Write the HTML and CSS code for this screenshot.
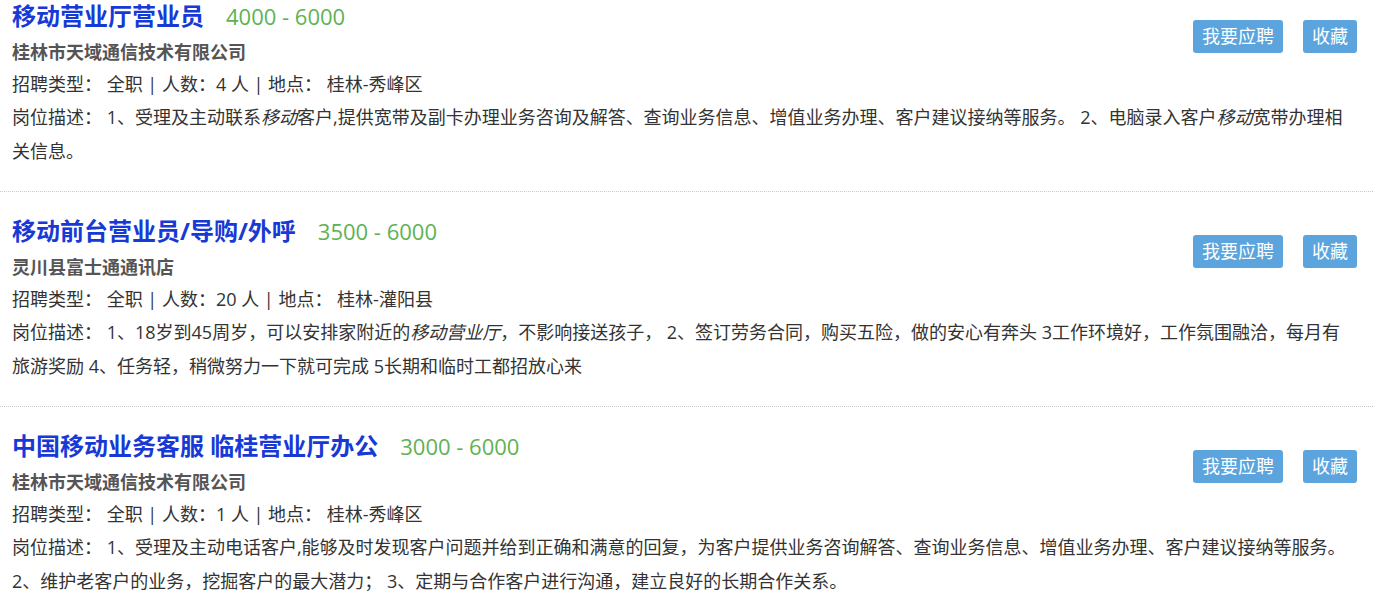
FILE: index.html
```html
<!DOCTYPE html>
<html lang="zh-CN">
<head>
  <meta charset="UTF-8">
  <title>职位列表</title>
  <link rel="stylesheet" href="styles.css">
</head>
<body>

  <ul class="job-list">
    <li class="job-item">
      <div class="job-actions">
        <a class="btn" href="#">我要应聘</a>
        <a class="btn" href="#">收藏</a>
      </div>
      <h2 class="job-title">移动营业厅营业员<span class="salary">4000 - 6000</span></h2>
      <p class="company">桂林市天域通信技术有限公司</p>
      <p class="info">招聘类型： 全职 | 人数：4 人 | 地点： 桂林-秀峰区</p>
      <p class="desc">岗位描述： 1、受理及主动联系<em>移动</em>客户,提供宽带及副卡办理业务咨询及解答、查询业务信息、增值业务办理、客户建议接纳等服务。 2、电脑录入客户<em>移动</em>宽带办理相关信息。</p>
    </li>
    <li class="job-item">
      <div class="job-actions">
        <a class="btn" href="#">我要应聘</a>
        <a class="btn" href="#">收藏</a>
      </div>
      <h2 class="job-title">移动前台营业员/导购/外呼<span class="salary">3500 - 6000</span></h2>
      <p class="company">灵川县富士通通讯店</p>
      <p class="info">招聘类型： 全职 | 人数：20 人 | 地点： 桂林-灌阳县</p>
      <p class="desc">岗位描述： 1、18岁到45周岁，可以安排家附近的<em>移动营业厅</em>，不影响接送孩子， 2、签订劳务合同，购买五险，做的安心有奔头 3工作环境好，工作氛围融洽，每月有旅游奖励 4、任务轻，稍微努力一下就可完成 5长期和临时工都招放心来</p>
    </li>
    <li class="job-item">
      <div class="job-actions">
        <a class="btn" href="#">我要应聘</a>
        <a class="btn" href="#">收藏</a>
      </div>
      <h2 class="job-title">中国移动业务客服 临桂营业厅办公<span class="salary">3000 - 6000</span></h2>
      <p class="company">桂林市天域通信技术有限公司</p>
      <p class="info">招聘类型： 全职 | 人数：1 人 | 地点： 桂林-秀峰区</p>
      <p class="desc">岗位描述： 1、受理及主动电话客户,能够及时发现客户问题并给到正确和满意的回复，为客户提供业务咨询解答、查询业务信息、增值业务办理、客户建议接纳等服务。 2、维护老客户的业务，挖掘客户的最大潜力； 3、定期与合作客户进行沟通，建立良好的长期合作关系。</p>
    </li>
  </ul>

</body>
</html>
```

FILE: styles.css
```css
body {
  margin: 0;
  font-family: "Open Sans", "Noto Sans CJK SC", sans-serif;
  font-size: 18px;
  color: #333;
  background: #fff;
}

.job-list {
  list-style: none;
  margin: 0;
  padding: 0;
  width: 1373px;
}

.job-item {
  padding: 23px 21px 23px 12px;
  border-bottom: 1px dotted #c8c8c8;
}

.job-item:first-child {
  padding-top: 0;
}

.job-actions {
  float: right;
  display: flex;
  gap: 20px;
  margin-top: 20px;
  margin-right: -5px;
}

.btn {
  display: block;
  height: 33px;
  line-height: 33px;
  padding: 0 9px;
  border-radius: 3px;
  background: #5ba4dd;
  color: #fff;
  font-size: 18px;
  text-decoration: none;
}

.job-title {
  margin: 0;
  font-size: 24px;
  line-height: 31px;
  font-weight: bold;
  color: #1739d6;
}

.salary {
  margin-left: 22px;
  font-size: 22px;
  font-weight: normal;
  color: #5eb253;
}

.company {
  margin: 4px 0 0;
  line-height: 32px;
  font-weight: bold;
  color: #555;
}

.info {
  margin: 0;
  line-height: 32px;
}

.desc {
  margin: 0;
  line-height: 34px;
}

.desc em {
  font-style: italic;
}
```
